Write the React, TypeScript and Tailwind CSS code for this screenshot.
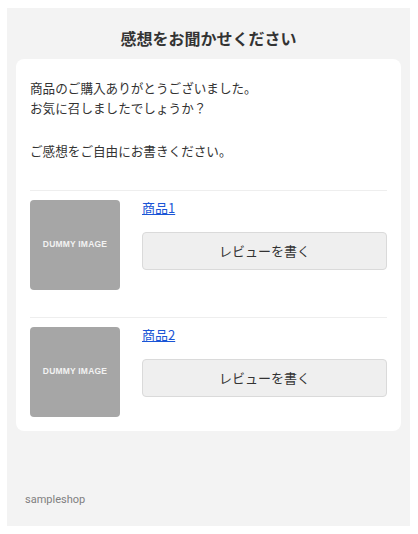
import React from "react";

const jp = { fontFamily: '"Noto Sans CJK JP", "Noto Sans", sans-serif' };

function Item({ name }: { name: string }) {
  return (
    <div className="border-t border-[#eeeeee] pt-[9px] pb-[14px] flex gap-[22px]">
      <div className="w-[90px] h-[90px] shrink-0 rounded-[4px] bg-[#a6a6a6] flex items-center justify-center">
        <span
          className="text-[8.5px] font-bold text-[#f2f2f2] tracking-[0.2px]"
          style={{ fontFamily: '"Liberation Sans", Arial, sans-serif' }}
        >
          DUMMY IMAGE
        </span>
      </div>
      <div className="flex-1 flex flex-col">
        <a href="#" className="-mt-[2px] text-[13px] leading-[19px] text-[#1a55d6] underline self-start">
          {name}
        </a>
        <button className="mt-[15px] h-[38px] w-full rounded-[4px] border border-[#dadada] bg-[#efefef] text-[13px] text-[#333333]">
          レビューを書く
        </button>
      </div>
    </div>
  );
}

export default function App() {
  return (
    <div className="bg-white pt-2 pb-2 pl-[7px] pr-2" style={jp}>
      <div className="bg-[#f3f3f3] pt-[18px] px-[9px] pb-[18px]">
        <h1 className="text-center text-[16px] leading-[24px] font-bold text-[#333333] mb-[9px]">
          感想をお聞かせください
        </h1>
        <div className="bg-white rounded-[8px] px-[14px] pt-[19px]">
          <p className="text-[12.6px] leading-[19.5px] text-[#333333]">
            商品のご購入ありがとうございました。
            <br />
            お気に召しましたでしょうか？
          </p>
          <p className="mt-[24px] text-[12.6px] leading-[19.5px] text-[#333333]">
            ご感想をご自由にお書きください。
          </p>
          <div className="mt-[29px] flex flex-col gap-[13px]">
            <Item name="商品1" />
            <Item name="商品2" />
          </div>
        </div>
        <div
          className="mt-[61px] pl-[9px] text-[11px] leading-[16px] text-[#808080]"
          style={{ fontFamily: 'Roboto, "Liberation Sans", sans-serif' }}
        >
          sampleshop
        </div>
      </div>
    </div>
  );
}
